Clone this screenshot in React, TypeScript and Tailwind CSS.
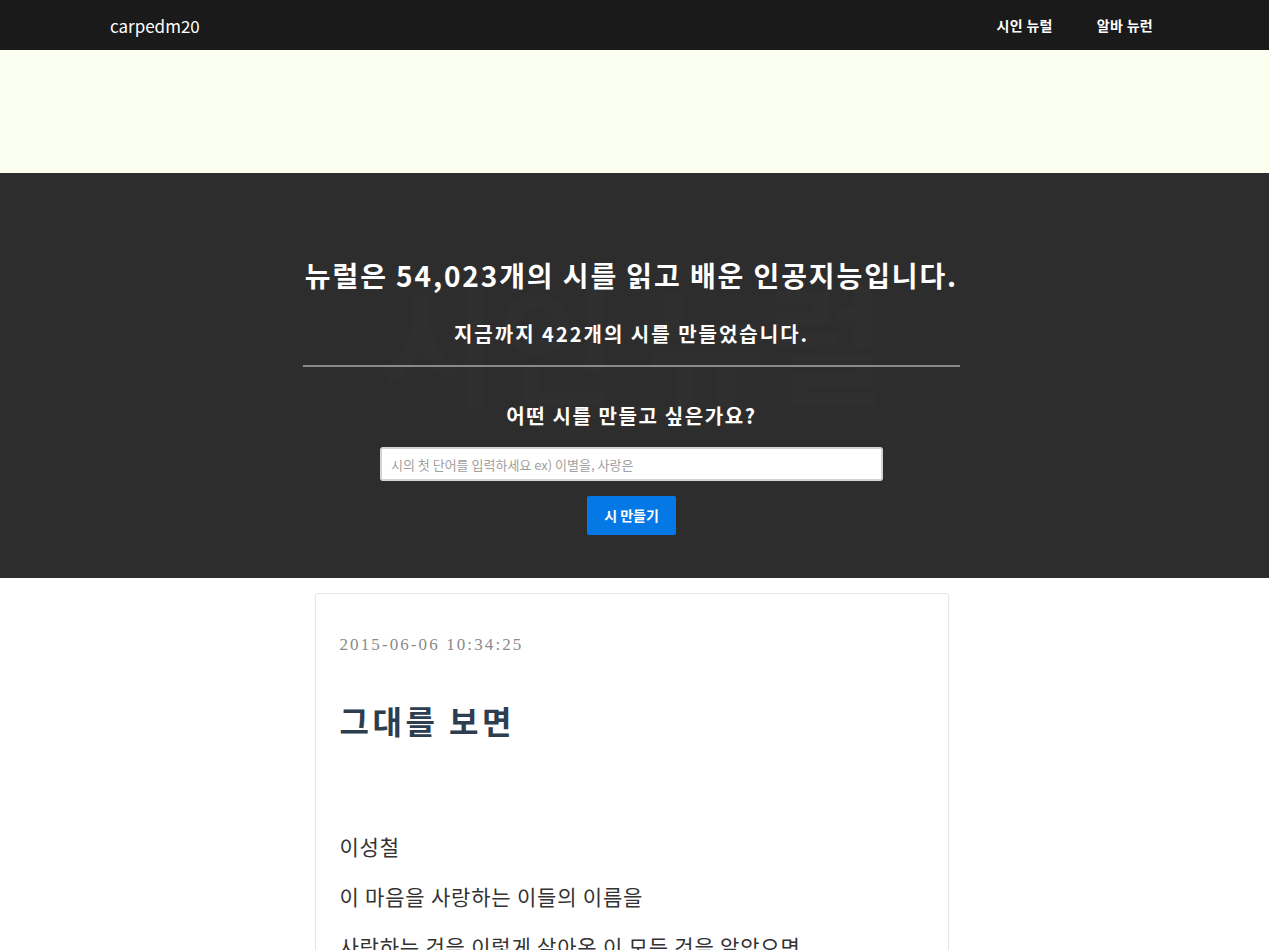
import React, { useState } from 'react'

const sans = "font-['Noto_Sans_CJK_KR','Noto_Sans',sans-serif]"

const lines = ['이성철', '이 마음을 사랑하는 이들의 이름을', '사랑하는 것을 이렇게 살아온 이 모든 것을 알았으면']

const Navbar = () => (
  <nav className={`h-[50px] bg-[#1a1a1a] flex items-center justify-between pl-[110px] pr-[116px] ${sans}`}>
    <a href="#" className="text-[17px] text-white leading-none">carpedm20</a>
    <div className="flex items-center gap-[44px]">
      <a href="#" className="text-[14px] font-bold text-white tracking-[0.3px]">시인 뉴럴</a>
      <a href="#" className="text-[14px] font-bold text-white tracking-[0.3px]">알바 뉴런</a>
    </div>
  </nav>
)

const Hero = () => {
  const [word, setWord] = useState('')

  return (
    <section className={`relative bg-[#2d2d2d] pt-[82px] pb-[43px] overflow-hidden ${sans}`}>
      {/* faint watermark behind the hero text */}
      <div className="absolute inset-x-0 top-[100px] pr-[6px] text-center text-[130px] font-bold leading-none text-[#2f2f2f] select-none pointer-events-none" aria-hidden>
        시인 뉴럴
      </div>
      <div className="relative flex flex-col items-center pr-[6px]">
        <h1 className="text-[28px] leading-[40px] font-bold text-white tracking-[1.9px]">
          뉴럴은 54,023개의 시를 읽고 배운 인공지능입니다.
        </h1>
        <h2 className="mt-[24px] text-[20px] leading-[30px] font-bold text-white tracking-[2px]">
          지금까지 422개의 시를 만들었습니다.
        </h2>
        <hr className="mt-[16px] w-[657px] border-0 h-[2px] bg-[#8a8a8a]" />
        <h3 className="mt-[34px] text-[20px] leading-[30px] font-bold text-white tracking-[1.6px]">
          어떤 시를 만들고 싶은가요?
        </h3>
        <input
          value={word}
          onChange={e => setWord(e.target.value)}
          placeholder="시의 첫 단어를 입력하세요 ex) 이별을, 사랑은"
          className="mt-[16px] w-[503px] h-[34px] rounded-[3px] border-2 border-[#d4d4d4] bg-white px-[9px] text-[13px] text-[#333] placeholder:text-[#a0a0a0] outline-none"
        />
        <button className="mt-[15px] w-[89px] h-[39px] rounded-[2px] bg-[#0479e6] text-white text-[14px] font-bold">
          시 만들기
        </button>
      </div>
    </section>
  )
}

const PoemCard = () => (
  <div className="pr-[6px]">
    <article className="mt-[15px] mx-auto w-[634px] border border-[#e6e6e6] rounded-[3px] shadow-[0_1px_2px_rgba(0,0,0,0.04)] px-[24px] pt-[39px] pb-[40px]">
      <p className="text-[17px] leading-[24px] text-[#8a8a8a] tracking-[2.1px] font-['Liberation_Serif',serif]">
        2015-06-06 10:34:25
      </p>
      <h2 className="mt-[43px] text-[32px] leading-[40px] font-bold text-[#2c3e50] tracking-[3.5px] font-['Noto_Sans_CJK_KR',serif]">
        그대를 보면
      </h2>
      <div className={`mt-[91px] flex flex-col gap-[20px] text-[21px] leading-[30px] text-[#333] tracking-[0.8px] ${sans}`}>
        {lines.map(l => (
          <p key={l}>{l}</p>
        ))}
      </div>
    </article>
  </div>
)

export default function App() {
  return (
    <div className="min-h-screen bg-white">
      <Navbar />
      <div className="h-[123px] bg-[#fafff0]" />
      <Hero />
      <PoemCard />
    </div>
  )
}
